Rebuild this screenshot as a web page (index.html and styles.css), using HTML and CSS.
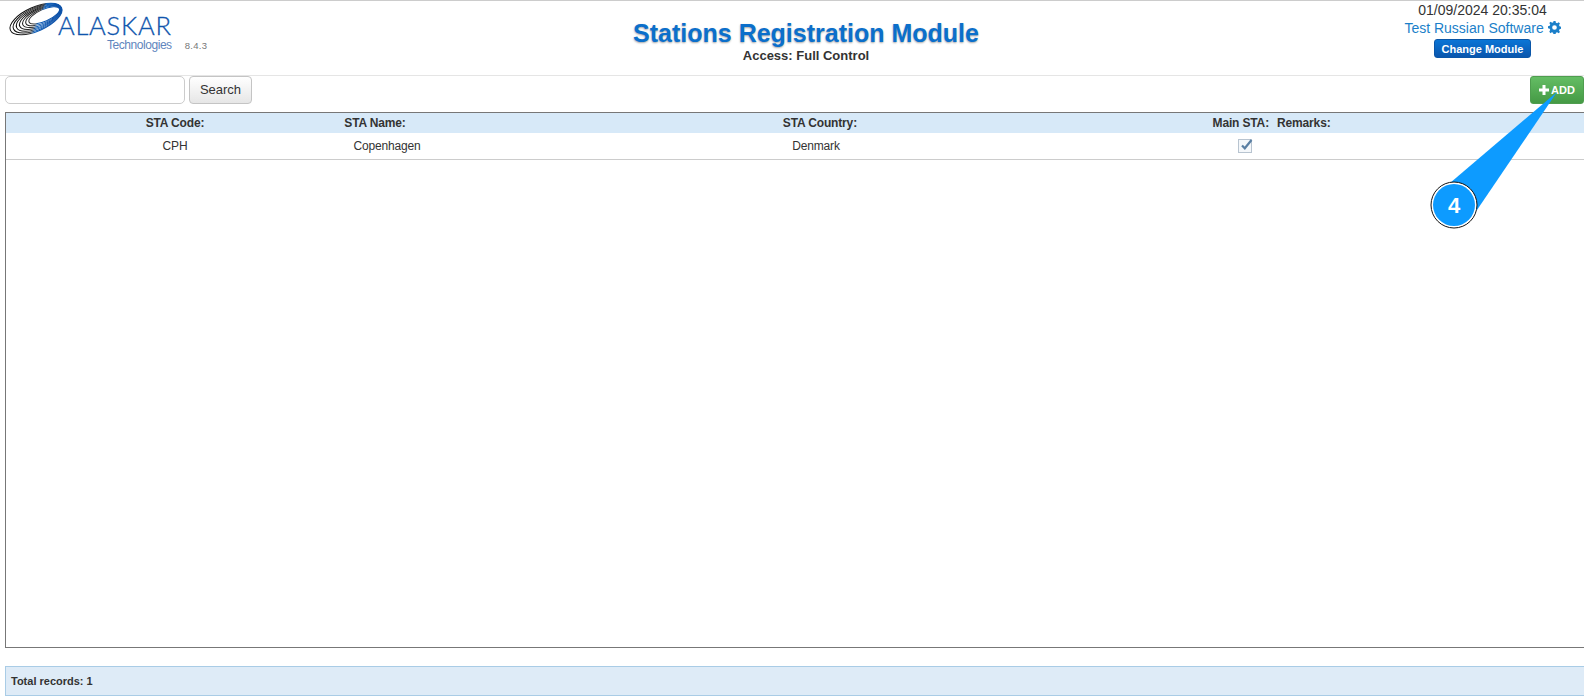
FILE: index.html
```html
<!DOCTYPE html>
<html lang="en">
<head>
<meta charset="utf-8">
<title>Stations Registration Module</title>
<link rel="stylesheet" href="styles.css">
</head>
<body>
<header class="top">
  <div class="brand">
    <svg class="swoosh" width="56" height="34" viewBox="0 0 56 34" aria-hidden="true">
      <defs>
        <linearGradient id="sw" gradientUnits="userSpaceOnUse" x1="18" y1="6" x2="36" y2="26">
          <stop offset="0" stop-color="#0c0c0c"/>
          <stop offset=".52" stop-color="#333"/>
          <stop offset=".64" stop-color="#0f5fb8"/>
          <stop offset="1" stop-color="#0a50a8"/>
        </linearGradient>
      </defs>
      <g fill="none" stroke="url(#sw)" stroke-width="1" transform="rotate(-24 27 16)">
        <ellipse cx="27" cy="16" rx="28" ry="12"/>
        <ellipse cx="28.500" cy="16" rx="26.100" ry="11"/>
        <ellipse cx="30" cy="16" rx="24.200" ry="10"/>
        <ellipse cx="31.500" cy="16" rx="22.300" ry="9"/>
        <ellipse cx="33" cy="16" rx="20.400" ry="8"/>
        <ellipse cx="34.500" cy="16" rx="18.500" ry="7"/>
        <ellipse cx="36" cy="16" rx="16.600" ry="6"/>
      </g>
    </svg>
    <div class="wordmark">
      <div class="alaskar">ALASKAR</div>
      <div class="tech-row"><span class="tech">Technologies</span><span class="version">8.4.3</span></div>
    </div>
  </div>
  <div class="heading">
    <h1>Stations Registration Module</h1>
    <div class="access">Access: Full Control</div>
  </div>
  <div class="user">
    <div class="clock">01/09/2024 20:35:04</div>
    <div class="username">Test Russian Software
      <svg class="gear" width="13" height="13" viewBox="0 0 25 25" aria-hidden="true"><path fill="#1b7fc9" fill-rule="evenodd" d="M10.500 0h4l.7 3.300 2.400 1 2.900-1.800 2.500 2.500-1.800 2.900 1 2.400 3.300.7v4l-3.300.7-1 2.400 1.800 2.900-2.500 2.500-2.900-1.800-2.400 1-.7 3.300h-4l-.7-3.300-2.400-1-2.900 1.800L2.500 20l1.800-2.900-1-2.400L0 14v-4l3.300-.7 1-2.400L2.500 4l2.500-2.500 2.900 1.800 2.400-1zM12.500 8a4.500 4.500 0 1 0 0 9 4.500 4.500 0 0 0 0-9z"/></svg>
    </div>
    <button class="change" type="button">Change Module</button>
  </div>
</header>
<div class="toolbar">
  <input class="search-input" type="text" aria-label="Search">
  <button class="search-btn" type="button">Search</button>
  <button class="add" type="button"><svg class="plus" width="10" height="10" viewBox="0 0 10 10" aria-hidden="true"><path d="M3.500 0h3v3.500H10v3H6.500V10h-3V6.500H0v-3h3.500z" fill="#fff"/></svg>ADD</button>
</div>
<main class="grid-box">
  <div class="row head">
    <div>STA Code:</div>
    <div>STA Name:</div>
    <div class="c-country">STA Country:</div>
    <div class="c-main">Main STA:</div>
    <div class="c-remarks">Remarks:</div>
  </div>
  <div class="row body">
    <div>CPH</div>
    <div>Copenhagen</div>
    <div>Denmark</div>
    <div class="b-main"><span class="check"><svg width="14" height="14" viewBox="0 0 14 14" aria-hidden="true"><path d="M3 7.500l2.800 2.800L12.500 2" fill="none" stroke="#5a7fa3" stroke-width="2.200"/></svg></span></div>
  </div>
</main>
<footer class="total">Total records: 1</footer>
<svg class="callout" width="150" height="150" viewBox="0 0 150 150" aria-hidden="true">
  <path d="M126 1L19 92L46 119Z" fill="#0d9bff"/>
  <circle cx="23" cy="114" r="23" fill="#fff" stroke="#111" stroke-width="1"/>
  <circle cx="23" cy="114" r="21" fill="#0d9bff"/>
  <text x="23" y="122" text-anchor="middle" class="callout-num">4</text>
</svg>
</body>
</html>
```
FILE: styles.css
```css
* { box-sizing: border-box; }
html, body { margin: 0; padding: 0; }
body {
  width: 1584px;
  height: 699px;
  overflow: hidden;
  position: relative;
  background: #fff;
  font-family: "Liberation Sans", Arial, sans-serif;
  color: #333;
  font-size: 12px;
}
.top {
  height: 76px;
  border-top: 1px solid #ccc;
  border-bottom: 1px solid #e5e5e5;
  display: grid;
  grid-template-columns: 1fr auto 1fr;
  align-items: start;
}
.brand { display: flex; padding: 2px 0 0 9px; }
.swoosh { flex: none; overflow: visible; }
.wordmark { margin: 10px 0 0 -7px; }
.alaskar {
  font-family: "Lato", "Liberation Sans", sans-serif;
  font-weight: 300;
  font-size: 25.500px;
  line-height: 24px;
  letter-spacing: .75px;
  color: #0f55ad;
  -webkit-text-stroke: .3px #0f55ad;
}
.tech-row { display: flex; align-items: center; padding-left: 49px; height: 14px; margin-top: 1px; }
.tech { font-size: 12px; letter-spacing: -.45px; color: #5f86bd; }
.version { font-size: 9.500px; color: #777; margin-left: 13px; letter-spacing: .3px; }
.heading { text-align: center; padding: 18px 0 0 28px; }
h1 {
  margin: 0;
  font-size: 25px;
  line-height: 28px;
  font-weight: 700;
  color: #0b6fcb;
  text-shadow: 0 1px 2px rgba(0,0,0,.35);
}
.access { font-size: 13px; font-weight: 700; line-height: 14px; margin-top: 2px; color: #333; }
.user { justify-self: end; width: 198px; text-align: center; padding: 1px 5px 0 0; }
.clock { font-size: 14px; line-height: 16px; color: #333; }
.username { font-size: 14px; line-height: 18px; margin-top: 1px; color: #1b7fc9; white-space: nowrap; }
.gear { vertical-align: -1px; }
.change {
  display: block;
  margin: 2px auto 0;
  width: 97px;
  height: 19px;
  padding: 0;
  border: 1px solid #0a56a8;
  border-radius: 3px;
  background: linear-gradient(#0a75d6, #0a56ad);
  color: #fff;
  font: 700 11px "Liberation Sans", Arial, sans-serif;
}
.toolbar { height: 36px; display: flex; align-items: flex-start; padding: 0 0 0 5px; }
.search-input {
  width: 180px;
  height: 28px;
  border: 1px solid #ccc;
  border-radius: 5px;
  background: #fff;
}
.search-btn {
  width: 63px;
  height: 28px;
  margin-left: 4px;
  padding: 0 0 2px;
  border: 1px solid #c4c4c4;
  border-radius: 4px;
  background: linear-gradient(#fff, #e6e6e6);
  color: #333;
  font: 13px "Liberation Sans", Arial, sans-serif;
}
.add {
  margin-left: auto;
  width: 54px;
  height: 28px;
  padding: 0;
  display: flex;
  align-items: center;
  justify-content: center;
  gap: 2px;
  border: 1px solid #4f9d4f;
  border-radius: 3px;
  background: linear-gradient(#64bd64, #459a45);
  color: #fff;
  font: 700 11px "Liberation Sans", Arial, sans-serif;
}
.grid-box {
  height: 536px;
  margin-left: 5px;
  width: 1579px;
  border: 1px solid #777;
  border-right: 0;
}
.row { display: grid; text-align: center; white-space: nowrap; letter-spacing: -.15px; }
.head {
  height: 20px;
  background: #d7e9f8;
  font-weight: 700;
  line-height: 20px;
  grid-template-columns: 338px 62px 451px 412px 1fr;
}
.c-country { text-align: right; }
.c-main { text-align: right; }
.c-remarks { text-align: left; padding-left: 8px; }
.body {
  height: 27px;
  border-bottom: 1px solid #ccc;
  line-height: 26px;
  grid-template-columns: 338px 86px 772px 1fr;
}
.b-main { display: flex; align-items: center; padding-left: 36px; }
.check {
  width: 14px;
  height: 14px;
  border: 1px solid #b8c4d0;
  display: block;
  position: relative;
  background: #f4f7fa;
}
.check svg { position: absolute; left: 0; top: -2px; }
.total {
  margin: 18px 0 0 5px;
  height: 30px;
  background: #deebf7;
  border: 1px solid #a9cce6;
  border-right: 0;
  padding-left: 5px;
  font-size: 11px;
  font-weight: 700;
  line-height: 28px;
}
.callout { position: absolute; left: 1431px; top: 91px; overflow: visible; }
.callout-num { font: 700 22px "Liberation Sans", Arial, sans-serif; fill: #fff; }
```
